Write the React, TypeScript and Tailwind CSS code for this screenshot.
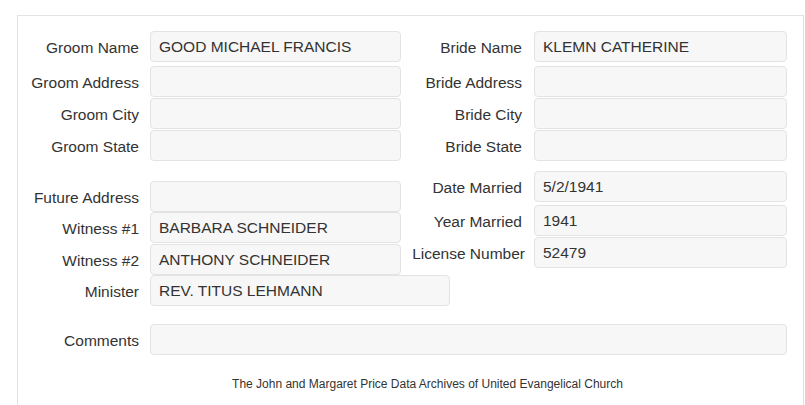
const font = { fontFamily: '"Liberation Sans", Arial, sans-serif' };

function Field({
  label,
  value = "",
  inputW = "w-[251px]",
  gap = "ml-[11px]",
  className = "",
  labelClass = "",
}: {
  label: string;
  value?: string;
  inputW?: string;
  gap?: string;
  className?: string;
  labelClass?: string;
}) {
  return (
    <div className={`flex items-center ${className}`}>
      <div className={`w-[121px] shrink-0 text-right text-[15.5px] leading-[18px] text-[#333] pt-[2px] whitespace-nowrap ${labelClass}`}>
        {label}
      </div>
      <div
        className={`${gap} ${inputW} h-[31px] shrink-0 rounded-[4px] border border-[#e3e3e3] bg-[#f7f7f7] px-[8px] flex items-center text-[15.5px] text-[#333]`}
      >
        {value}
      </div>
    </div>
  );
}

export default function App() {
  return (
    <div className="w-[805px] h-[405px] overflow-hidden bg-white" style={font}>
      <div className="ml-[17px] mt-[15px] w-[787px] h-[420px] border border-[#e3e3e3] border-b-0">
        {/* top: groom / bride */}
        <div className="flex pt-[15px]">
          <div className="flex flex-col w-[383px] shrink-0">
            <Field label="Groom Name" value="GOOD MICHAEL FRANCIS" />
            <Field label="Groom Address" className="mt-[4px]" />
            <Field label="Groom City" className="mt-[1px]" />
            <Field label="Groom State" className="mt-[1px]" />
          </div>
          <div className="flex flex-col">
            <Field label="Bride Name" value="KLEMN CATHERINE" inputW="w-[253px]" gap="ml-[12px]" />
            <Field label="Bride Address" inputW="w-[253px]" gap="ml-[12px]" className="mt-[4px]" />
            <Field label="Bride City" inputW="w-[253px]" gap="ml-[12px]" className="mt-[1px]" />
            <Field label="Bride State" inputW="w-[253px]" gap="ml-[12px]" className="mt-[1px]" />
          </div>
        </div>

        {/* lower: witnesses / marriage */}
        <div className="flex">
          <div className="flex flex-col w-[383px] shrink-0 pt-[20px]">
            <Field label="Future Address" />
            <Field label="Witness #1" value="BARBARA SCHNEIDER" />
            <Field label="Witness #2" value="ANTHONY SCHNEIDER" className="mt-[1px]" />
            <Field label="Minister" value="REV. TITUS LEHMANN" inputW="w-[300px]" />
          </div>
          <div className="flex flex-col pt-[10px]">
            <Field label="Date Married" value="5/2/1941" inputW="w-[253px]" gap="ml-[12px]" />
            <Field label="Year Married" value="1941" inputW="w-[253px]" gap="ml-[12px]" className="mt-[3px]" />
            <Field
              label="License Number"
              value="52479"
              inputW="w-[253px]"
              gap="ml-[12px]"
              labelClass="translate-x-[3px]"
              className="mt-[1px]"
            />
          </div>
        </div>

        <Field label="Comments" inputW="w-[637px]" className="mt-[18px]" />

        <div className="mt-[22px] pl-[34px] text-center text-[12px] leading-[14px] text-[#333]">
          The John and Margaret Price Data Archives of United Evangelical Church
        </div>
      </div>
    </div>
  );
}
